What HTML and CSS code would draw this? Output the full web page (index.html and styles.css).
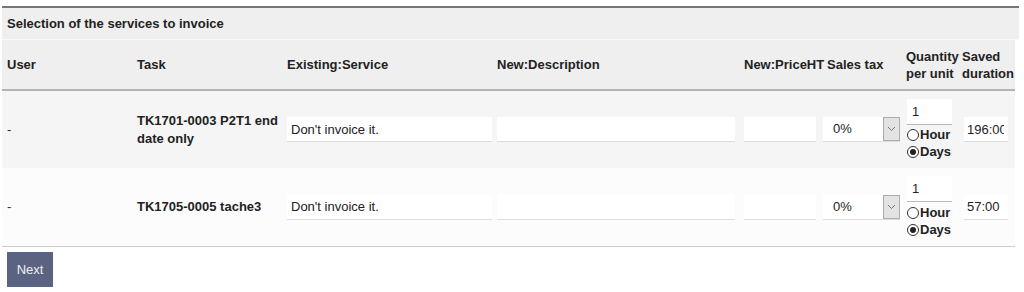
FILE: index.html
```html
<!DOCTYPE html>
<html lang="en">
<head>
    <meta charset="UTF-8">
    <title>Selection of the services to invoice</title>
    <link rel="stylesheet" href="styles.css">
</head>
<body>
    <div class="page">
        <div class="title-bar">Selection of the services to invoice</div>

        <table class="services">
            <colgroup>
                <col class="c-user">
                <col class="c-task">
                <col class="c-service">
                <col class="c-desc">
                <col class="c-price">
                <col class="c-tax">
                <col class="c-qty">
                <col class="c-dur">
            </colgroup>
            <thead>
                <tr>
                    <th class="pad-wide">User</th>
                    <th class="pad-wide">Task</th>
                    <th class="pad-mid">Existing:Service</th>
                    <th>New:Description</th>
                    <th class="pad-mid">New:PriceHT</th>
                    <th class="th-tax">Sales tax</th>
                    <th class="pad-tight">Quantity per unit</th>
                    <th class="pad-tight">Saved duration</th>
                </tr>
            </thead>
            <tbody>
                <tr class="odd">
                    <td class="pad-wide">-</td>
                    <td class="pad-wide task">TK1701-0003 P2T1 end date only</td>
                    <td class="pad-mid"><input class="field f-service" type="text" value="Don't invoice it."></td>
                    <td><input class="field f-desc" type="text" value=""></td>
                    <td class="pad-mid"><input class="field f-price" type="text" value=""></td>
                    <td class="pad-tax">
                        <div class="select-box">
                            <span class="select-value">0%</span>
                            <span class="select-arrow">
                                <svg width="9" height="6" viewBox="0 0 9 6"><path d="M1 1 L4.5 4.5 L8 1" fill="none" stroke="#777" stroke-width="1"/></svg>
                            </span>
                        </div>
                    </td>
                    <td class="pad-qty">
                        <div class="qty-stack">
                            <input class="field f-qty" type="text" value="1">
                            <label class="unit"><input type="radio" name="unit1"> Hour</label>
                            <label class="unit"><input type="radio" name="unit1" checked> Days</label>
                        </div>
                    </td>
                    <td class="pad-dur"><input class="field f-dur" type="text" value="196:00"></td>
                </tr>
                <tr class="even">
                    <td class="pad-wide">-</td>
                    <td class="pad-wide task">TK1705-0005 tache3</td>
                    <td class="pad-mid"><input class="field f-service" type="text" value="Don't invoice it."></td>
                    <td><input class="field f-desc" type="text" value=""></td>
                    <td class="pad-mid"><input class="field f-price" type="text" value=""></td>
                    <td class="pad-tax">
                        <div class="select-box">
                            <span class="select-value">0%</span>
                            <span class="select-arrow">
                                <svg width="9" height="6" viewBox="0 0 9 6"><path d="M1 1 L4.5 4.5 L8 1" fill="none" stroke="#777" stroke-width="1"/></svg>
                            </span>
                        </div>
                    </td>
                    <td class="pad-qty">
                        <div class="qty-stack">
                            <input class="field f-qty" type="text" value="1">
                            <label class="unit"><input type="radio" name="unit2"> Hour</label>
                            <label class="unit"><input type="radio" name="unit2" checked> Days</label>
                        </div>
                    </td>
                    <td class="pad-dur"><input class="field f-dur" type="text" value="57:00"></td>
                </tr>
            </tbody>
        </table>

        <button class="btn-next">Next</button>
    </div>
</body>
</html>
```

FILE: styles.css
```css
body {
    margin: 0;
    background: #fff;
    font-family: "Liberation Sans", Arial, sans-serif;
    font-size: 13px;
    color: #333;
}
.page {
    padding: 6px 0 0 2px;
}
.title-bar {
    width: 1017px;
    height: 34px;
    box-sizing: border-box;
    border-top: 2px solid #777;
    border-bottom: 1px solid #f9f9f9;
    background: #efefef;
    padding: 0 5px;
    line-height: 31px;
    font-weight: bold;
    color: #222;
}
.services {
    width: 1013px;
    table-layout: fixed;
    border-collapse: collapse;
    border-bottom: 1px solid #ccc;
}
.c-user { width: 130px; }
.c-task { width: 152px; }
.c-service { width: 211px; }
.c-desc { width: 246px; }
.c-price { width: 78px; }
.c-tax { width: 84px; }
.c-qty { width: 56px; }
.c-dur { width: 56px; }

.services th {
    height: 49px;
    background: #efefef;
    border-bottom: 2px solid #b4b4b4;
    text-align: left;
    vertical-align: middle;
    font-weight: bold;
    line-height: 17px;
    color: #222;
    padding: 0 2px;
}
.services td {
    vertical-align: middle;
    padding: 0 2px;
    line-height: 18px;
}
.services tr.odd td {
    height: 77px;
    background: #f5f5f5;
}
.services tr.even td {
    height: 78px;
    background: #fcfcfc;
}
.services .pad-wide { padding-left: 5px; }
.services .pad-mid { padding-left: 3px; }
.services .pad-tight { padding-left: 3px; padding-right: 0; }
.services .th-tax { padding-left: 8px; }
.services .pad-tax { padding-left: 4px; }
.services .pad-qty { padding-left: 4px; }
.services .pad-dur { padding-left: 5px; }
.services td.task {
    font-weight: bold;
    color: #222;
}

.field {
    display: block;
    box-sizing: border-box;
    height: 25px;
    border: none;
    border-bottom: 1px solid #ddd;
    background: #fff;
    font-family: "Liberation Sans", Arial, sans-serif;
    font-size: 13px;
    color: #222;
    padding: 0 4px;
    margin: 0;
    outline: none;
}
.f-service { width: 205px; }
.f-desc { width: 238px; }
.f-price { width: 72px; }
.f-qty {
    width: 45px;
    height: 26px;
    border-bottom-color: #bbb;
    padding-left: 5px;
}
.f-dur {
    width: 44px;
    padding-left: 3px;
}

.select-box {
    display: flex;
    align-items: stretch;
    width: 77px;
    height: 25px;
    box-sizing: border-box;
    background: #fff;
    border-bottom: 1px solid #ddd;
}
.select-value {
    flex: 1;
    padding-left: 10px;
    line-height: 24px;
    color: #222;
}
.select-arrow {
    width: 17px;
    box-sizing: border-box;
    background: #e3e3e3;
    border: 1px solid #acacac;
    display: flex;
    align-items: center;
    justify-content: center;
}

.qty-stack {
    display: flex;
    flex-direction: column;
}
.unit {
    display: flex;
    align-items: center;
    height: 17px;
    font-weight: bold;
    color: #222;
}
.unit input {
    appearance: none;
    -webkit-appearance: none;
    width: 12px;
    height: 12px;
    margin: 0 1px 0 0;
    border: 1px solid #333;
    border-radius: 50%;
    background: #fff;
    box-sizing: border-box;
    position: relative;
}
.unit input:checked::after {
    content: "";
    position: absolute;
    left: 2px;
    top: 2px;
    width: 6px;
    height: 6px;
    border-radius: 50%;
    background: #222;
}
.unit:first-of-type {
    margin-top: 2px;
}

.btn-next {
    display: block;
    margin: 5px 0 0 5px;
    width: 46px;
    height: 35px;
    border: none;
    background: #5a6482;
    color: #eee;
    font-family: "Liberation Sans", Arial, sans-serif;
    font-size: 13px;
    padding: 0;
    cursor: pointer;
}
```
